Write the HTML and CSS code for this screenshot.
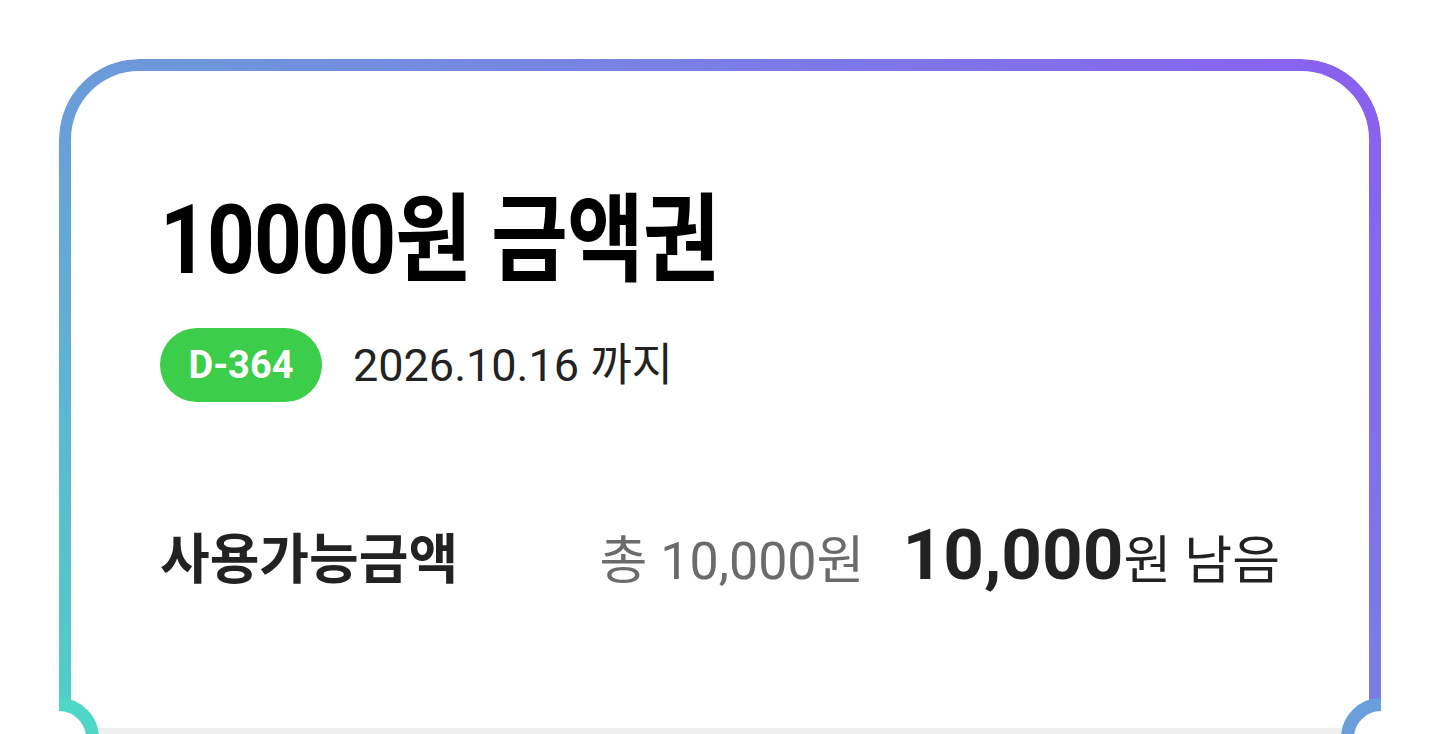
FILE: index.html
```html
<!DOCTYPE html>
<html lang="ko">
<head>
<meta charset="utf-8">
<title>10000원 금액권</title>
<link rel="stylesheet" href="styles.css">
</head>
<body>
<div class="page">
  <div class="ticket">
    <div class="card">
      <div class="card-top">
        <h1 class="title"><span class="title-text">10000원 금액권</span></h1>
        <div class="meta">
          <span class="dday">D-364</span>
          <span class="until">2026.10.16 까지</span>
        </div>
        <div class="balance">
          <span class="label">사용가능금액</span>
          <span class="amounts">
            <span class="total">총 <span class="num-total">10,000</span>원</span>
            <span class="remain"><b class="num-remain">10,000</b>원 남음</span>
          </span>
        </div>
      </div>
      <div class="card-bottom"></div>
    </div>
    <span class="notch notch-left"></span>
    <span class="notch notch-right"></span>
  </div>
</div>
</body>
</html>
```
FILE: styles.css
```css
* { box-sizing: border-box; }
html, body { margin: 0; background: #fff; }
body {
  font-family: "Roboto", "Noto Sans CJK KR", sans-serif;
  overflow: hidden;
  height: 734px;
}
.page { padding: 59px 59px 0; }
.ticket {
  position: relative;
  height: 760px;
  border-radius: 80px 80px 0 0;
  overflow: hidden;
}
.card {
  height: 100%;
  display: flex;
  flex-direction: column;
  border: 12px solid transparent;
  border-bottom: 0;
  border-radius: 80px 80px 0 0;
  background:
    linear-gradient(#fff, #fff) padding-box,
    linear-gradient(45deg, #4dd8c4 0%, #6a9dd9 35%, #8a5ff0 100%) border-box;
}
.card-top {
  height: 657px;
  padding: 121px 89px 0 89px;
}
.card-bottom { flex: 1; background: #efefef; }
.title {
  margin: 0;
  font-size: 96px;
  font-weight: 700;
  line-height: 1;
  color: #000;
  letter-spacing: -1px;
  white-space: nowrap;
}
.title-text {
  display: inline-block;
  transform: scaleX(0.87);
  transform-origin: left center;
}
.meta {
  display: flex;
  align-items: center;
  gap: 31px;
  margin-top: 40px;
}
.dday {
  display: flex;
  align-items: center;
  justify-content: center;
  width: 162px;
  height: 74px;
  border-radius: 37px;
  background: #3ccd4b;
  color: #fff;
  font-size: 38px;
  font-weight: 700;
}
.until {
  font-size: 45px;
  color: #222;
  line-height: 1;
}
.balance {
  display: flex;
  justify-content: space-between;
  align-items: baseline;
  margin-top: 111px;
}
.label {
  font-size: 54px;
  font-weight: 700;
  color: #222;
}
.amounts {
  display: flex;
  align-items: baseline;
  gap: 38px;
}
.total { font-size: 52px; color: #6b6b6b; }
.remain { font-size: 52px; color: #222; }
.num-remain { font-size: 71px; font-weight: 700; }
.notch {
  position: absolute;
  top: 639px;
  width: 80px;
  height: 80px;
  border-radius: 50%;
  background: #fff;
  border: 13px solid;
}
.notch-left { left: -40px; border-color: #4fd6c7; }
.notch-right { right: -40px; border-color: #6a9fdb; }
```
